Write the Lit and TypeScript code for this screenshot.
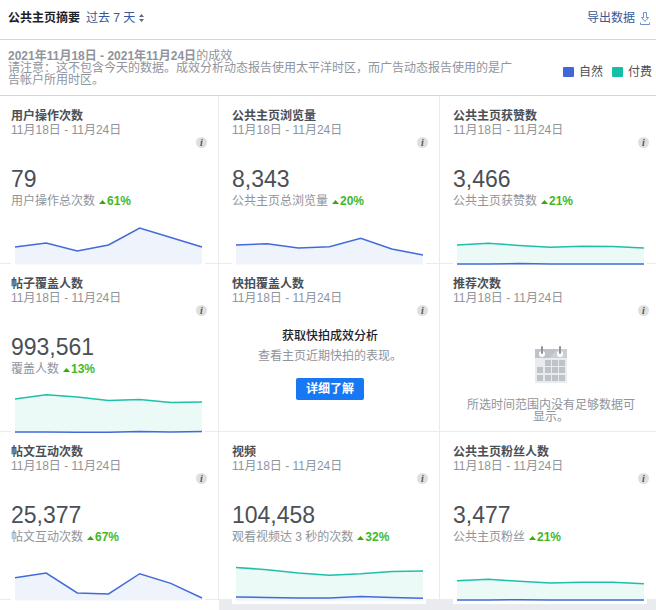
import { LitElement, html, css, svg, nothing } from "lit";
import { customElement, property } from "lit/decorators.js";

type Tone = "organic" | "paid";
interface Series {
  tone: Tone;
  points: number[];
}
interface Metric {
  title: string;
  kind: "chart" | "promo" | "empty";
  value?: string;
  label?: string;
  change?: string;
  series?: Series[];
}

const RANGE = "11月18日 - 11月24日";

// Heights of the daily points, measured down from the top of a 50 unit chart.
const METRICS: Metric[] = [
  { title: "用户操作次数", kind: "chart", value: "79", label: "用户操作总次数", change: "61%",
    series: [{ tone: "organic", points: [29, 25, 33, 27, 10, 19.5, 29] }] },
  { title: "公共主页浏览量", kind: "chart", value: "8,343", label: "公共主页总浏览量", change: "20%",
    series: [{ tone: "organic", points: [27, 25.7, 30, 28.7, 20.3, 31, 37] }] },
  { title: "公共主页获赞数", kind: "chart", value: "3,466", label: "公共主页获赞数", change: "21%",
    series: [
      { tone: "paid", points: [27, 25.2, 27.5, 29.3, 28.3, 28.5, 30] },
      { tone: "organic", points: [46, 46, 45.6, 46, 46, 46, 46] },
    ] },
  { title: "帖子覆盖人数", kind: "chart", value: "993,561", label: "覆盖人数", change: "13%",
    series: [
      { tone: "paid", points: [13, 8.7, 11, 14.5, 13.5, 16.4, 16] },
      { tone: "organic", points: [46, 46, 46.2, 46.2, 45.4, 46, 45.6] },
    ] },
  { title: "快拍覆盖人数", kind: "promo" },
  { title: "推荐次数", kind: "empty" },
  { title: "帖文互动次数", kind: "chart", value: "25,377", label: "帖文互动次数", change: "67%",
    series: [{ tone: "organic", points: [23.7, 19, 39, 40, 19.7, 29.4, 44] }] },
  { title: "视频", kind: "chart", value: "104,458", label: "观看视频达 3 秒的次数", change: "32%",
    series: [
      { tone: "paid", points: [13.4, 15.7, 19, 21.3, 19.7, 17.4, 17] },
      { tone: "organic", points: [43, 43.4, 44, 44, 42.4, 43.4, 44.3] },
    ] },
  { title: "公共主页粉丝人数", kind: "chart", value: "3,477", label: "公共主页粉丝", change: "21%",
    series: [
      { tone: "paid", points: [26.7, 25.2, 27.3, 29, 28.2, 28.3, 29.7] },
      { tone: "organic", points: [46, 46, 45.7, 46, 46, 46, 46] },
    ] },
];

@customElement("trend-chart")
class TrendChart extends LitElement {
  @property({ attribute: false }) series: Series[] = [];

  static styles = css`
    :host { display: block; background: #fff; }
    .plot { display: block; width: 100%; height: 50px; }
    .line { fill: none; stroke-width: 1.5; vector-effect: non-scaling-stroke; }
    .line.organic { stroke: #426bd9; }
    .line.paid { stroke: #1fbfa9; }
    .area.organic { fill: #eff3fc; }
    .area.paid { fill: #ebf9f7; }
  `;

  render() {
    const step = 187 / 6;
    const path = (s: Series) =>
      s.points.map((y, i) => `${i ? "L" : "M"}${(4 + i * step).toFixed(1)} ${y}`).join("");
    return html`<svg class="plot" viewBox="0 0 194 50" preserveAspectRatio="none" aria-hidden="true">
      ${this.series.map((s) => svg`
        <path class="area ${s.tone}" d="${path(s)}V46.500H4Z"></path>
        <path class="line ${s.tone}" d=${path(s)}></path>`)}
    </svg>`;
  }
}

@customElement("metric-card")
class MetricCard extends LitElement {
  @property({ attribute: false }) metric!: Metric;

  static styles = css`
    :host {
      display: block;
      box-sizing: border-box;
      min-width: 0;
      padding: 13px 11px 0 13px;
      background: #fff;
      border-right: 1px solid #e9ebee;
      border-bottom: 1px solid #e9ebee;
      color: #90949c;
      line-height: 14px;
    }
    .title { margin: 0; font-size: 12px; line-height: 14px; font-weight: bold; color: #4b4f56; }
    .range { margin: 0; }
    .tools { display: flex; justify-content: flex-end; }
    .info {
      width: 11px; height: 11px; padding: 0; border: 0; border-radius: 50%;
      background: #dfdfdf; color: #555;
      font: italic bold 10px/11px "Liberation Serif", serif;
      text-align: center;
    }
    .value { margin: 17px 0 1px; font-size: 23px; line-height: 28px; color: #4b4f56; }
    .label { display: flex; align-items: center; margin: 0 0 10px; }
    .up { width: 7px; height: 4px; margin: 2px 1px 0 4px; fill: #3fa50f; }
    .change { color: #42b72a; }
    .chart { position: relative; z-index: 1; margin: 0 2px -5px 0; }
    .promo { display: flex; flex-direction: column; align-items: center; padding-top: 12px; }
    .lead { margin: 0; color: #1d2129; font-weight: 500; line-height: 16px; }
    .text { margin: 4px 0 14px; line-height: 16px; }
    .more {
      height: 22px; padding: 0 10px; border: 0; border-radius: 2px;
      background: #1877f2; color: #fff; font: inherit; font-weight: bold; line-height: 22px;
    }
    .empty { display: flex; flex-direction: column; align-items: center; padding: 29px 10px 0; }
    .calendar { width: 34px; height: 40px; }
    .note { margin: 14px 0 0; line-height: 12px; text-align: center; }
  `;

  private body() {
    const m = this.metric;
    if (m.kind === "promo") {
      return html`<div class="promo">
        <p class="lead">获取快拍成效分析</p>
        <p class="text">查看主页近期快拍的表现。</p>
        <button class="more" type="button">详细了解</button>
      </div>`;
    }
    if (m.kind === "empty") {
      const days = [[11, 15], [18, 15], [25, 15], [3, 22], [11, 22], [18, 22], [25, 22], [3, 30], [11, 30], [18, 30], [25, 30]];
      return html`<div class="empty">
        <svg class="calendar" viewBox="0 0 34 40" aria-hidden="true">
          <path fill="#e9ebee" d="M1 12h32v26H1z"></path>
          <path fill="#bec3c9" d="M1 4h32v9H1z"></path>
          <path fill="#ccd0d5" d="M24 4h9v9H15z"></path>
          <circle cx="8" cy="9" r="3" fill="#fff"></circle>
          <circle cx="26" cy="9" r="3" fill="#fff"></circle>
          <path stroke="#8d949e" stroke-width="2" stroke-linecap="round" d="M8 2v6M26 2v6"></path>
          ${days.map(([x, y]) => svg`<rect x=${x} y=${y} width="6" height="6" fill="#bec3c9"></rect>`)}
        </svg>
        <p class="note">所选时间范围内没有足够数据可显示。</p>
      </div>`;
    }
    return html`
      <p class="value">${m.value}</p>
      <p class="label">
        <span>${m.label}</span>
        <svg class="up" viewBox="0 0 7 4" aria-hidden="true"><path d="M3.5 0L7 4H0Z"></path></svg>
        <strong class="change">${m.change}</strong>
      </p>
      <trend-chart class="chart" .series=${m.series ?? []}></trend-chart>`;
  }

  render() {
    if (!this.metric) return nothing;
    return html`
      <h2 class="title">${this.metric.title}</h2>
      <p class="range">${RANGE}</p>
      <div class="tools"><button class="info" type="button" aria-label="详情">i</button></div>
      ${this.body()}`;
  }
}

@customElement("app-root")
class AppRoot extends LitElement {
  static styles = css`
    :host {
      display: flex;
      flex-direction: column;
      min-height: 100vh;
      overflow: hidden;
      background: #e9ebee;
      color: #90949c;
      font-family: "Liberation Sans", "Noto Sans CJK SC", sans-serif;
      font-size: 12px;
    }
    .bar {
      display: flex; align-items: center;
      padding: 10px 6px 13px 8px;
      background: #fff; border-bottom: 1px solid #d4d6da;
      line-height: 16px;
    }
    .heading { margin: 0 6px 0 0; font-size: 12px; color: #1d2129; }
    .period {
      appearance: none; padding: 0; border: 0; background: none;
      color: #365899; font: inherit; line-height: 16px;
    }
    .sort { width: 5px; height: 8px; margin-left: 3px; fill: #5b6880; }
    .export {
      display: flex; align-items: center; gap: 5px; margin-left: auto;
      color: #365899; text-decoration: none;
    }
    .download { width: 10px; height: 13px; fill: none; stroke: #6f8fc9; }
    .summary {
      display: flex; align-items: center; gap: 48px;
      padding: 10px 4px 9px 8px;
      background: #fff; border-bottom: 1px solid #d4d6da;
    }
    .about { flex: 1; margin: 0; line-height: 12px; }
    .legend { display: flex; gap: 9px; margin: 8px 0 0; padding: 0; list-style: none; color: #4b4f56; line-height: 16px; }
    .entry { display: flex; align-items: center; gap: 5px; }
    .swatch { width: 11px; height: 10px; border-radius: 1px; }
    .swatch.organic { background: #3f69d8; }
    .swatch.paid { background: #15bfa7; }
    .cards {
      flex: 1;
      display: grid;
      grid-template-columns: repeat(3, 1fr);
      grid-template-rows: repeat(3, auto) 1fr;
      margin: 0 -5px 0 -2px;
    }
    .next { background: #fff; }
  `;

  render() {
    return html`
      <header class="bar">
        <h1 class="heading">公共主页摘要</h1>
        <select class="period" aria-label="时间范围"><option>过去 7 天</option></select>
        <svg class="sort" viewBox="0 0 5 8" aria-hidden="true"><path d="M2.5 0L5 3H0ZM2.5 8L0 5H5Z"></path></svg>
        <a class="export" href="#">导出数据
          <svg class="download" viewBox="0 0 10 13" aria-hidden="true">
            <path d="M3.5 .5h3v5h2L5 9.5 1.5 5.5h2zM.5 10.500v2h9v-2"></path>
          </svg>
        </a>
      </header>
      <section class="summary">
        <p class="about">
          <strong>2021年11月18日 - 2021年11月24日</strong>的成效<br />请注意：这不包含今天的数据。成效分析动态报告使用太平洋时区，而广告动态报告使用的是广告帐户所用时区。
        </p>
        <ul class="legend">
          <li class="entry"><span class="swatch organic"></span>自然</li>
          <li class="entry"><span class="swatch paid"></span>付费</li>
        </ul>
      </section>
      <main class="cards">
        ${METRICS.map((m) => html`<metric-card .metric=${m}></metric-card>`)}
        <div class="next"></div>
      </main>`;
  }
}
